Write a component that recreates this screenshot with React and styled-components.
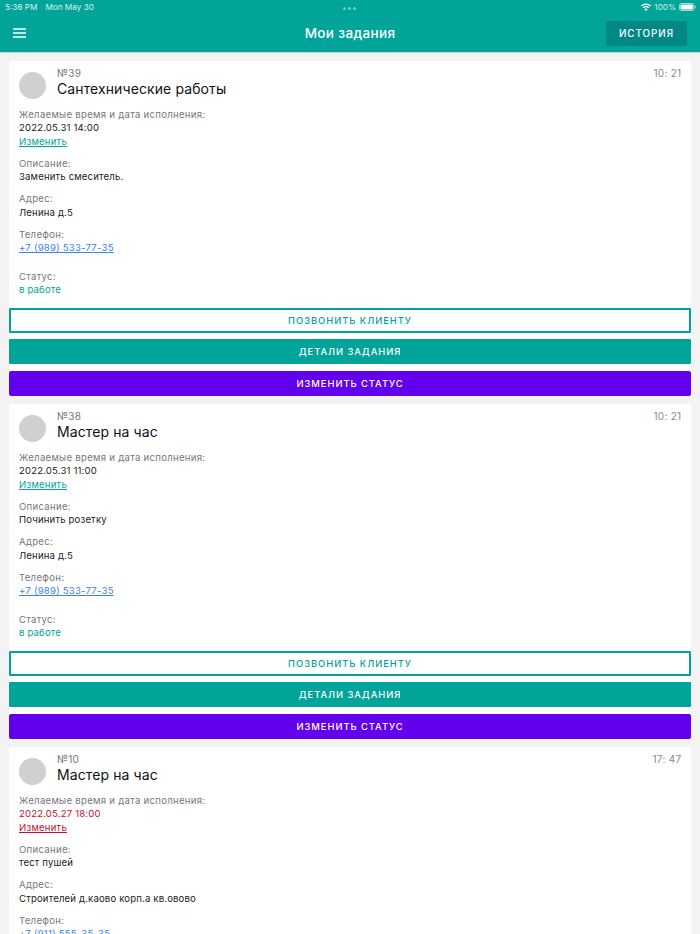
import React from "react";
import styled, { createGlobalStyle } from "styled-components";

const Global = createGlobalStyle`
  html, body { margin: 0; padding: 0; background: #f3f3f3; }
  body { width: 700px; height: 934px; overflow: hidden; font-family: Inter, Roboto, "Liberation Sans", sans-serif; }
  * { box-sizing: border-box; }
`;
const Page = styled.div`width: 700px; height: 934px; overflow: hidden; display: flex; flex-direction: column;`;
const Header = styled.header`
  flex: none; height: 53px; background: #00a499; border-bottom: 1px solid #b5dfdb; color: #fff; position: relative;
  display: flex; flex-direction: column;
`;
const StatusBar = styled.div`
  height: 14px; display: flex; align-items: center; justify-content: space-between; padding: 0 4px 0 5px;
  font-size: 8.2px; line-height: 14px; color: #d8f1ef;
`;
const StatusLeft = styled.div`display: flex; gap: 8px;`;
const StatusRight = styled.div`display: flex; align-items: center; gap: 3px;`;
const Dots = styled.div`
  position: absolute; left: 343px; top: 7px; display: flex; gap: 2px;
`;
const Dot = styled.span`width: 3px; height: 3px; border-radius: 50%; background: #6fd0ca;`;
const Nav = styled.div`
  flex: 1; display: flex; align-items: center; justify-content: space-between; padding: 0 13px; position: relative;
`;
const Menu = styled.svg`width: 13px; height: 10px; display: block;`;
const Title = styled.h1`
  position: absolute; left: 0; right: 0; top: 7px; margin: 0; text-align: center;
  font-size: 13.5px; line-height: 24px; font-weight: 500; letter-spacing: 0.35px;
`;
const HistoryBtn = styled.div`
  width: 81px; height: 25px; border-radius: 2px; background: #008886; display: flex; align-items: center; justify-content: center;
  font-size: 9.8px; font-weight: 500; letter-spacing: 1px;
`;
const List = styled.main`flex: 1; padding: 7.55px 9px 0; display: flex; flex-direction: column; gap: 7.75px;`;
const Card = styled.article`
  flex: none; background: #fff; border-radius: 2px; display: flex; flex-direction: column;
`;
const Body = styled.div`padding: 4px 10px 0; display: flex; flex-direction: column; position: relative; height: 247.5px;`;
const Head = styled.div`display: flex; gap: 11px; align-items: center; height: 34px; margin-bottom: 9px;`;
const Avatar = styled.div`width: 27px; height: 27px; border-radius: 50%; background: #d0d0d0; flex: none; margin-top: 7px;`;
const HeadText = styled.div`display: flex; flex-direction: column;`;
const Num = styled.div`font-size: 10px; line-height: 13px; color: #777; letter-spacing: 0.3px; margin: 1px 0 -1px;`;
const Name = styled.div`font-size: 14px; line-height: 19px; color: #111; letter-spacing: 0.1px;`;
const Time = styled.div`
  position: absolute; right: 9.5px; top: 6px; font-size: 10px; line-height: 13px; color: #888; letter-spacing: 0.3px;
`;
const Group = styled.div`margin-bottom: ${p => p.$gap ?? 8.5}px;`;
const Label = styled.div`font-size: 9.6px; line-height: 13.5px; color: #777; letter-spacing: 0.28px;`;
const Value = styled.div`font-size: 9.6px; line-height: 13.5px; color: ${p => p.$color || "#222"}; letter-spacing: 0.15px;`;
const TextLink = styled.a`
  display: block; font-size: 9.6px; line-height: 13.5px; color: ${p => p.$color}; letter-spacing: 0.22px; text-decoration: underline;
`;
const Actions = styled.div`display: flex; flex-direction: column; gap: 6.4px;`;
const Button = styled.div`
  height: 25px; display: flex; align-items: center; justify-content: center; border-radius: ${p => p.$radius ?? 1}px;
  font-size: 9.4px; font-weight: 500; letter-spacing: 0.95px;
  background: ${p => p.$bg}; color: ${p => p.$fg}; border: ${p => p.$outline ? "2px solid #00a499" : "none"};
`;

const tasks = [
  { n: 39, name: "Сантехнические работы", time: "10: 21", date: "2022.05.31 14:00", desc: "Заменить смеситель.", addr: "Ленина д.5", phone: "+7 (989) 533-77-35" },
  { n: 38, name: "Мастер на час", time: "10: 21", date: "2022.05.31 11:00", desc: "Починить розетку", addr: "Ленина д.5", phone: "+7 (989) 533-77-35" },
  { n: 10, name: "Мастер на час", time: "17: 47", date: "2022.05.27 18:00", desc: "тест пушей", addr: "Строителей д.каово корп.а кв.овово", phone: "+7 (911) 555-35-35", late: true },
];

function Task({ t }) {
  return (
    <Card>
      <Body>
        <Time>{t.time}</Time>
        <Head>
          <Avatar />
          <HeadText>
            <Num>№{t.n}</Num>
            <Name>{t.name}</Name>
          </HeadText>
        </Head>
        <Group>
          <Label>Желаемые время и дата исполнения:</Label>
          <Value $color={t.late ? "#c8102e" : undefined}>{t.date}</Value>
          <TextLink $color={t.late ? "#c8102e" : "#00a499"}>Изменить</TextLink>
        </Group>
        <Group><Label>Описание:</Label><Value>{t.desc}</Value></Group>
        <Group><Label>Адрес:</Label><Value>{t.addr}</Value></Group>
        <Group $gap={15}><Label>Телефон:</Label><TextLink $color="#3b82f6">{t.phone}</TextLink></Group>
        <Group $gap={0}><Label>Статус:</Label><Value $color="#00a499">в работе</Value></Group>
      </Body>
      <Actions>
        <Button $bg="#fff" $fg="#00a499" $outline>ПОЗВОНИТЬ КЛИЕНТУ</Button>
        <Button $bg="#00a499" $fg="#fff">ДЕТАЛИ ЗАДАНИЯ</Button>
        <Button $bg="#6200ee" $fg="#fff" $radius={2}>ИЗМЕНИТЬ СТАТУС</Button>
      </Actions>
    </Card>
  );
}

export default function App() {
  return (
    <Page>
      <Global />
      <Header>
        <StatusBar>
          <StatusLeft><span>5:36 PM</span><span>Mon May 30</span></StatusLeft>
          <StatusRight>
            <svg width="10" height="8" viewBox="0 0 20 16" fill="#fff"><path d="M10 16 6.8 12.4a4.6 4.6 0 0 1 6.4 0zM5.2 10.6 3.4 8.6a9.6 9.6 0 0 1 13.2 0l-1.8 2a7 7 0 0 0-9.6 0zM1.8 6.8 0 4.8a14.6 14.6 0 0 1 20 0l-1.8 2a12 12 0 0 0-16.4 0z"/></svg>
            <span>100%</span>
            <svg width="17" height="8" viewBox="0 0 17 8"><rect x=".5" y=".5" width="14.5" height="7" rx="1.6" fill="none" stroke="#9fdcd7"/><rect x="1.5" y="1.5" width="12.5" height="5" rx="1" fill="#fff"/><rect x="15.6" y="2.7" width="1" height="2.6" rx=".5" fill="#9fdcd7"/></svg>
          </StatusRight>
        </StatusBar>
        <Dots><Dot /><Dot /><Dot /></Dots>
        <Nav>
          <Menu viewBox="0 0 13 10"><path d="M0 1h13M0 5h13M0 9h13" stroke="#fff" strokeWidth="1.4" /></Menu>
          <Title>Мои задания</Title>
          <HistoryBtn>ИСТОРИЯ</HistoryBtn>
        </Nav>
      </Header>
      <List>
        {tasks.map(t => <Task key={t.n} t={t} />)}
      </List>
    </Page>
  );
}
